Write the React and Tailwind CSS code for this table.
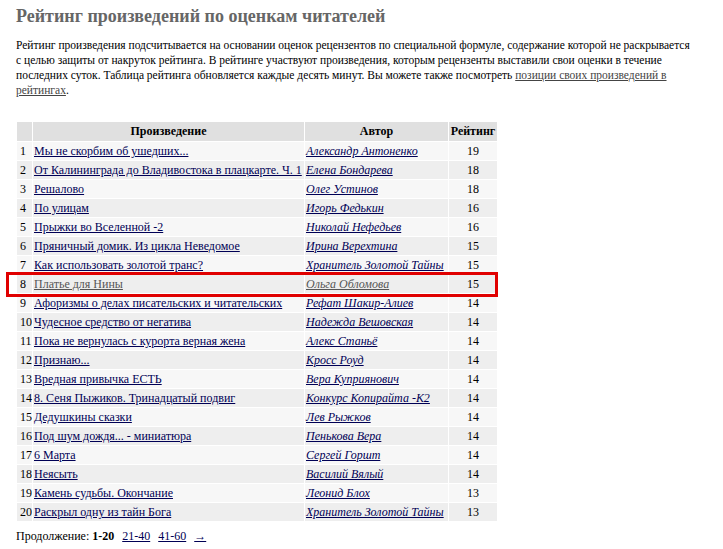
import React from "react";

const rows = [
  ["Мы не скорбим об ушедших...", "Александр Антоненко", 19],
  ["От Калининграда до Владивостока в плацкарте. Ч. 1", "Елена Бондарева", 18],
  ["Решалово", "Олег Устинов", 18],
  ["По улицам", "Игорь Федькин", 16],
  ["Прыжки во Вселенной -2", "Николай Нефедьев", 16],
  ["Пряничный домик. Из цикла Неведомое", "Ирина Верехтина", 15],
  ["Как использовать золотой транс?", "Хранитель Золотой Тайны", 15],
  ["Платье для Нины", "Ольга Обломова", 15],
  ["Афоризмы о делах писательских и читательских", "Рефат Шакир-Алиев", 14],
  ["Чудесное средство от негатива", "Надежда Вешовская", 14],
  ["Пока не вернулась с курорта верная жена", "Алекс Станьё", 14],
  ["Признаю...", "Кросс Роуд", 14],
  ["Вредная привычка ЕСТЬ", "Вера Куприянович", 14],
  ["8. Сеня Пыжиков. Тринадцатый подвиг", "Конкурс Копирайта -К2", 14],
  ["Дедушкины сказки", "Лев Рыжков", 14],
  ["Под шум дождя... - миниатюра", "Пенькова Вера", 14],
  ["6 Марта", "Сергей Горшт", 14],
  ["Неясыть", "Василий Вялый", 14],
  ["Камень судьбы. Окончание", "Леонид Блох", 13],
  ["Раскрыл одну из тайн Бога", "Хранитель Золотой Тайны", 13],
];

export default function App() {
  return (
    <div className="min-h-[549px] bg-white pl-4 pt-[5px] font-['Liberation_Serif',serif] text-[12px] text-black">
      <h1 className="text-[18px] font-bold leading-[22px] text-[#666666]">
        Рейтинг произведений по оценкам читателей
      </h1>
      <p className="mt-[11px] w-[704px] whitespace-nowrap text-[11.5px] leading-[15px]">
        Рейтинг произведения подсчитывается на основании оценок рецензентов по специальной формуле, содержание которой не раскрывается
        <br />
        с целью защиты от накруток рейтинга. В рейтинге участвуют произведения, которым рецензенты выставили свои оценки в течение
        <br />
        последних суток. Таблица рейтинга обновляется каждые десять минут. Вы можете также посмотреть{" "}
        <a className="text-[#444444] underline">
          позиции своих произведений в
          <br />
          рейтингах
        </a>
        .
      </p>

      <div className="relative mt-[23px] w-[482px]">
        <table className="w-[482px] border-separate border-spacing-[1px]">
          <thead>
            <tr className="bg-[#e0e0e0]">
              <th className="w-[14px] leading-[19px]"></th>
              <th className="w-[271px] font-bold leading-[19px]">Произведение</th>
              <th className="w-[143px] font-bold leading-[19px]">Автор</th>
              <th className="font-bold leading-[19px]">Рейтинг</th>
            </tr>
          </thead>
          <tbody>
            {rows.map((r, i) => {
              const hl = i === 7;
              const link = hl ? "text-[#555555] underline" : "text-[#000055] underline";
              return (
                <tr key={i} className={i % 2 === 0 ? "bg-[#f7f7f7]" : "bg-[#eeeeee]"}>
                  <td className="pl-[3px] leading-[18px] whitespace-nowrap">{i + 1}</td>
                  <td className="pl-[1px] leading-[18px] whitespace-nowrap">
                    <a className={link}>{r[0]}</a>
                  </td>
                  <td className="pl-[1px] leading-[18px] whitespace-nowrap italic">
                    <a className={link}>{r[1]}</a>
                  </td>
                  <td className="text-center leading-[18px]">{r[2]}</td>
                </tr>
              );
            })}
          </tbody>
        </table>
        <div className="pointer-events-none absolute left-[-10px] top-[151px] h-[25px] w-[492px] border-[3px] border-[#e00000]"></div>
      </div>

      <div className="mt-[7px] leading-[15px]">
        Продолжение: <b>1-20</b>
        <a className="ml-[8px] text-[#000055] underline">21-40</a>
        <a className="ml-[8px] text-[#000055] underline">41-60</a>
        <a className="ml-[8px] text-[#000055] underline">→</a>
      </div>
    </div>
  );
}
